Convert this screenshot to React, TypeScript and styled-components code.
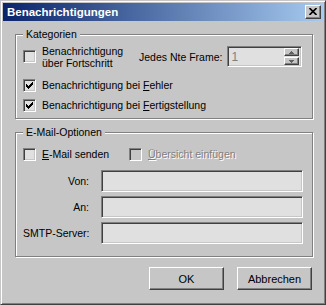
import React from "react";
import styled, { createGlobalStyle } from "styled-components";

const FACE = "#C6C6C6";
const FIELD = "#E0E0E0";

const GlobalStyle = createGlobalStyle`
  html, body {
    margin: 0;
    padding: 0;
    background: ${FACE};
  }
  body {
    font-family: "Liberation Sans", Arial, sans-serif;
    font-size: 10.5px;
    color: #000;
  }
`;

const Window = styled.div`
  box-sizing: border-box;
  width: 326px;
  height: 305px;
  background: ${FACE};
  border: 1px solid;
  border-color: ${FACE} #404040 #404040 ${FACE};
  box-shadow: inset 1px 1px 0 #fff, inset -1px -1px 0 #808080;
  padding: 2px;
  display: flex;
  flex-direction: column;
`;

const TitleBar = styled.div`
  height: 18px;
  flex: none;
  display: flex;
  align-items: center;
  justify-content: space-between;
  padding: 0 2px 0 4px;
  background: linear-gradient(to right, #0a246a, #a6caf0);
`;

const Title = styled.span`
  color: #fff;
  font-weight: bold;
  font-size: 11.5px;
`;

const CloseButton = styled.div`
  box-sizing: border-box;
  width: 16px;
  height: 14px;
  background: ${FACE};
  border: 1px solid;
  border-color: #fff #404040 #404040 #fff;
  box-shadow: inset -1px -1px 0 #808080;
  display: flex;
  align-items: center;
  justify-content: center;
  padding-right: 1px;
  padding-bottom: 1px;
`;

const Body = styled.div`
  display: flex;
  flex-direction: column;
  padding: 7px 10px 0 12px;
`;

const Group = styled.fieldset`
  margin: 0;
  padding: 0 7px;
  min-width: 0;
  border: 1px solid #808080;
  box-shadow: inset 1px 1px 0 #fff, 1px 1px 0 #fff;
  display: flex;
  flex-direction: column;
  & + & {
    margin-top: 7px;
  }
`;

const Legend = styled.legend`
  padding: 0 3px;
  margin: 0;
  line-height: 13px;
  background: ${FACE};
`;

const Row = styled.div<{ $h: number; $top: number; $bottom?: number }>`
  display: flex;
  align-items: center;
  height: ${(p) => p.$h}px;
  margin-top: ${(p) => p.$top}px;
  margin-bottom: ${(p) => p.$bottom ?? 0}px;
`;

const CheckItem = styled.label<{ $w?: number }>`
  display: flex;
  align-items: center;
  gap: 6px;
  width: ${(p) => (p.$w ? `${p.$w}px` : "auto")};
  flex: none;
`;

const Box = styled.span<{ $disabled?: boolean }>`
  box-sizing: border-box;
  width: 13px;
  height: 13px;
  flex: none;
  border: 1px solid;
  border-color: #808080 #fff #fff #808080;
  box-shadow: inset 1px 1px 0 #404040, inset -1px -1px 0 ${FACE};
  background: ${(p) => (p.$disabled ? FACE : FIELD)};
  display: flex;
  align-items: center;
  justify-content: center;
`;

const LabelText = styled.span<{ $disabled?: boolean }>`
  line-height: 12px;
  color: ${(p) => (p.$disabled ? "#808080" : "#000")};
  text-shadow: ${(p) => (p.$disabled ? "1px 1px 0 #fff" : "none")};
  white-space: nowrap;
`;

const Sunken = styled.div<{ $w: number; $h: number }>`
  box-sizing: border-box;
  width: ${(p) => p.$w}px;
  height: ${(p) => p.$h}px;
  flex: none;
  border: 1px solid;
  border-color: #808080 #fff #fff #808080;
  box-shadow: inset 1px 1px 0 #404040, inset -1px -1px 0 ${FACE};
  background: ${FIELD};
`;

const SpinBox = styled(Sunken)`
  display: flex;
  align-items: center;
  justify-content: space-between;
  padding: 0 2px 0 3px;
  margin-left: 5px;
`;

const SpinValue = styled.span`
  color: #808080;
  font-size: 12px;
`;

const SpinColumn = styled.div`
  display: flex;
  flex-direction: column;
  gap: 1px;
`;

const SpinButton = styled.div`
  box-sizing: border-box;
  width: 15px;
  height: 8px;
  background: ${FACE};
  border: 1px solid;
  border-color: #fff #404040 #404040 #fff;
  box-shadow: inset -1px -1px 0 #808080;
  display: flex;
  align-items: center;
  justify-content: center;
`;

const FieldRow = styled.div<{ $top: number; $bottom?: number }>`
  display: flex;
  align-items: center;
  gap: 12px;
  margin-top: ${(p) => p.$top}px;
  margin-bottom: ${(p) => p.$bottom ?? 0}px;
`;

const FieldLabel = styled.span`
  width: 66px;
  text-align: right;
  white-space: nowrap;
`;

const Buttons = styled.div`
  display: flex;
  justify-content: flex-end;
  gap: 13px;
  margin-top: 10px;
  padding-right: 1px;
`;

const Button = styled.div`
  box-sizing: border-box;
  width: 75px;
  height: 23px;
  background: ${FACE};
  border: 1px solid;
  border-color: #fff #404040 #404040 #fff;
  box-shadow: inset -1px -1px 0 #808080;
  display: flex;
  align-items: center;
  justify-content: center;
  font-size: 11px;
`;

const CheckMark = () => (
  <svg width="7" height="7" viewBox="0 0 7 7" shapeRendering="crispEdges">
    {[2, 3, 4, 3, 2, 1, 0].map((t, c) => (
      <rect key={c} x={c} y={t} width="1" height="3" fill="#000" />
    ))}
  </svg>
);

const Check = ({ checked, disabled }: { checked?: boolean; disabled?: boolean }) => (
  <Box $disabled={disabled}>{checked && <CheckMark />}</Box>
);

const Arrow = ({ up }: { up?: boolean }) => (
  <svg width="5" height="3" viewBox="0 0 5 3" shapeRendering="crispEdges">
    <polygon points={up ? "2.5,0 5,3 0,3" : "0,0 5,0 2.5,3"} fill="#606060" />
  </svg>
);

export default function App() {
  return (
    <>
      <GlobalStyle />
      <Window>
        <TitleBar>
          <Title>Benachrichtigungen</Title>
          <CloseButton>
            <svg width="8" height="7" viewBox="0 0 8 7">
              <path d="M0.5 0 L7.5 7 M7.5 0 L0.5 7" stroke="#000" strokeWidth="1.6" />
            </svg>
          </CloseButton>
        </TitleBar>
        <Body>
          <Group>
            <Legend>Kategorien</Legend>
            <Row $h={21} $top={5}>
              <CheckItem $w={116}>
                <Check />
                <LabelText>
                  Benachrichtigung
                  <br />
                  über Fortschritt
                </LabelText>
              </CheckItem>
              <LabelText>Jedes Nte Frame:</LabelText>
              <SpinBox $w={75} $h={21}>
                <SpinValue>1</SpinValue>
                <SpinColumn>
                  <SpinButton>
                    <Arrow up />
                  </SpinButton>
                  <SpinButton>
                    <Arrow />
                  </SpinButton>
                </SpinColumn>
              </SpinBox>
            </Row>
            <Row $h={20} $top={8}>
              <CheckItem>
                <Check checked />
                <LabelText>
                  Benachrichtigung bei <u>F</u>ehler
                </LabelText>
              </CheckItem>
            </Row>
            <Row $h={20} $top={0} $bottom={3}>
              <CheckItem>
                <Check checked />
                <LabelText>
                  Benachrichtigung bei <u>F</u>ertigstellung
                </LabelText>
              </CheckItem>
            </Row>
          </Group>
          <Group>
            <Legend>E-Mail-Optionen</Legend>
            <Row $h={20} $top={5}>
              <CheckItem $w={106}>
                <Check />
                <LabelText>
                  <u>E</u>-Mail senden
                </LabelText>
              </CheckItem>
              <CheckItem>
                <Check disabled />
                <LabelText $disabled>
                  <u>Ü</u>bersicht einfügen
                </LabelText>
              </CheckItem>
            </Row>
            <FieldRow $top={6}>
              <FieldLabel>Von:</FieldLabel>
              <Sunken $w={202} $h={22} />
            </FieldRow>
            <FieldRow $top={4}>
              <FieldLabel>An:</FieldLabel>
              <Sunken $w={202} $h={22} />
            </FieldRow>
            <FieldRow $top={4} $bottom={12}>
              <FieldLabel>SMTP-Server:</FieldLabel>
              <Sunken $w={202} $h={22} />
            </FieldRow>
          </Group>
          <Buttons>
            <Button>OK</Button>
            <Button>Abbrechen</Button>
          </Buttons>
        </Body>
      </Window>
    </>
  );
}
